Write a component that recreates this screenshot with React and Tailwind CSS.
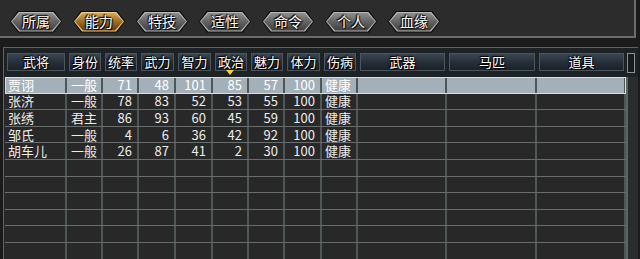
import React from "react";

const tabs = ["所属", "能力", "特技", "适性", "命令", "个人", "血缘"];

const cols = [
  { label: "武将", align: "left" },
  { label: "身份", align: "center" },
  { label: "统率", align: "right" },
  { label: "武力", align: "right" },
  { label: "智力", align: "right" },
  { label: "政治", align: "right" },
  { label: "魅力", align: "right" },
  { label: "体力", align: "right" },
  { label: "伤病", align: "left" },
  { label: "武器", align: "left" },
  { label: "马匹", align: "left" },
  { label: "道具", align: "left" },
];

const officers = [
  ["贾诩", "一般", 71, 48, 101, 85, 57, 100, "健康"],
  ["张济", "一般", 78, 83, 52, 53, 55, 100, "健康"],
  ["张绣", "君主", 86, 93, 60, 45, 59, 100, "健康"],
  ["邹氏", "一般", 4, 6, 36, 42, 92, 100, "健康"],
  ["胡车儿", "一般", 26, 87, 41, 2, 30, 100, "健康"],
];

const gridCols = "grid grid-cols-[62px_36px_36px_37px_37px_36px_36px_37px_36px_89px_90px_89px]";
const hex = "[clip-path:polygon(8px_0,calc(100%-8px)_0,100%_50%,calc(100%-8px)_100%,8px_100%,0_50%)]";
const shadow = "[text-shadow:0_0_2px_#000,1px_1px_1px_#000,-1px_-1px_1px_#000]";

function Tab({ label, active }) {
  return (
    <div className={`w-[52px] h-[22px] p-[1px] bg-[#0c0c0c] ${hex}`}>
      <div className={`w-full h-full p-[1px] ${hex} ${active ? "bg-[#f0d08a]" : "bg-[#b8b8b8]"}`}>
        <div
          className={`w-full h-full flex items-center justify-center text-[14px] text-white ${shadow} ${hex} ${
            active
              ? "bg-gradient-to-b from-[#d9a84e] via-[#9c6a22] to-[#5e3a0e]"
              : "bg-gradient-to-b from-[#8e8e8e] via-[#626262] to-[#3e3e3e]"
          }`}
        >
          {label}
        </div>
      </div>
    </div>
  );
}

function Cell({ children, align }) {
  const a = align === "right" ? "justify-end pr-[5px]" : align === "center" ? "justify-center" : "pl-[3px]";
  return (
    <div className={`flex items-center h-full border-r-2 border-[#4f5657] ${a}`}>
      {children}
    </div>
  );
}

export default function App() {
  const emptyRows = 6;
  return (
    <div
      className="w-[640px] h-[259px] overflow-hidden bg-[#1b1b1b] text-[#ececec]"
      style={{ fontFamily: '"Noto Sans CJK SC", "Liberation Sans", sans-serif' }}
    >
      {/* tab bar */}
      <div className="w-[636px] h-[38px] bg-[#2c2c2c] border-b-2 border-r-2 border-[#6c6c6c] flex items-center gap-[11px] pl-[10px] pt-[7px]">
        {tabs.map((t) => (
          <Tab key={t} label={t} active={t === "能力"} />
        ))}
      </div>

      {/* table frame */}
      <div className="mt-[9px] ml-[3px] w-[635px] h-[212px] border-t border-l border-[#5d6466] bg-[#1d2224] relative">
        {/* header */}
        <div className="flex h-[29px] pt-[5px] pl-[1px]">
          <div className={`${gridCols} h-[18px]`}>
            {cols.map((c) => (
              <div key={c.label} className="px-[2px] h-full">
                <div
                  className={`h-full flex items-center justify-center text-[13px] leading-[14px] text-white ${shadow} border border-[#4b565e] bg-gradient-to-b from-[#3a4650] via-[#26303a] to-[#1b2228]`}
                >
                  {c.label}
                </div>
              </div>
            ))}
          </div>
          <div className="ml-[1px] w-[8px] h-[20px] border border-[#8a9496] bg-[#161b1d]" />
        </div>
        <div className="absolute left-[222px] top-[22px] w-0 h-0 border-l-[4px] border-r-[4px] border-t-[5px] border-l-transparent border-r-transparent border-t-[#f2d23a]" />

        {/* body */}
        <div className="flex bg-[#282828]">
          <div className="w-[622px] pl-[1px]">
            {officers.map((o, i) => (
              <div
                key={o[0]}
                className={`${gridCols} h-[16.6px] text-[13px] leading-[14px] ${
                  i === 0
                    ? "bg-[#a4b0b7] outline outline-1 outline-[#d6e0e4] -outline-offset-1 text-white"
                    : "border-b border-[#686d6e]"
                }`}
              >
                {cols.map((c, j) => (
                  <Cell key={c.label} align={c.align}>
                    {o[j] ?? ""}
                  </Cell>
                ))}
              </div>
            ))}
            {Array.from({ length: emptyRows }).map((_, i) => (
              <div key={i} className={`${gridCols} h-[16.6px] border-b border-[#686d6e]`}>
                {cols.map((c) => (
                  <Cell key={c.label} align={c.align} />
                ))}
              </div>
            ))}
          </div>
          <div className="w-[12px] border-l-2 border-[#5c6365] bg-[#2a2d2e]" />
        </div>
      </div>
    </div>
  );
}
